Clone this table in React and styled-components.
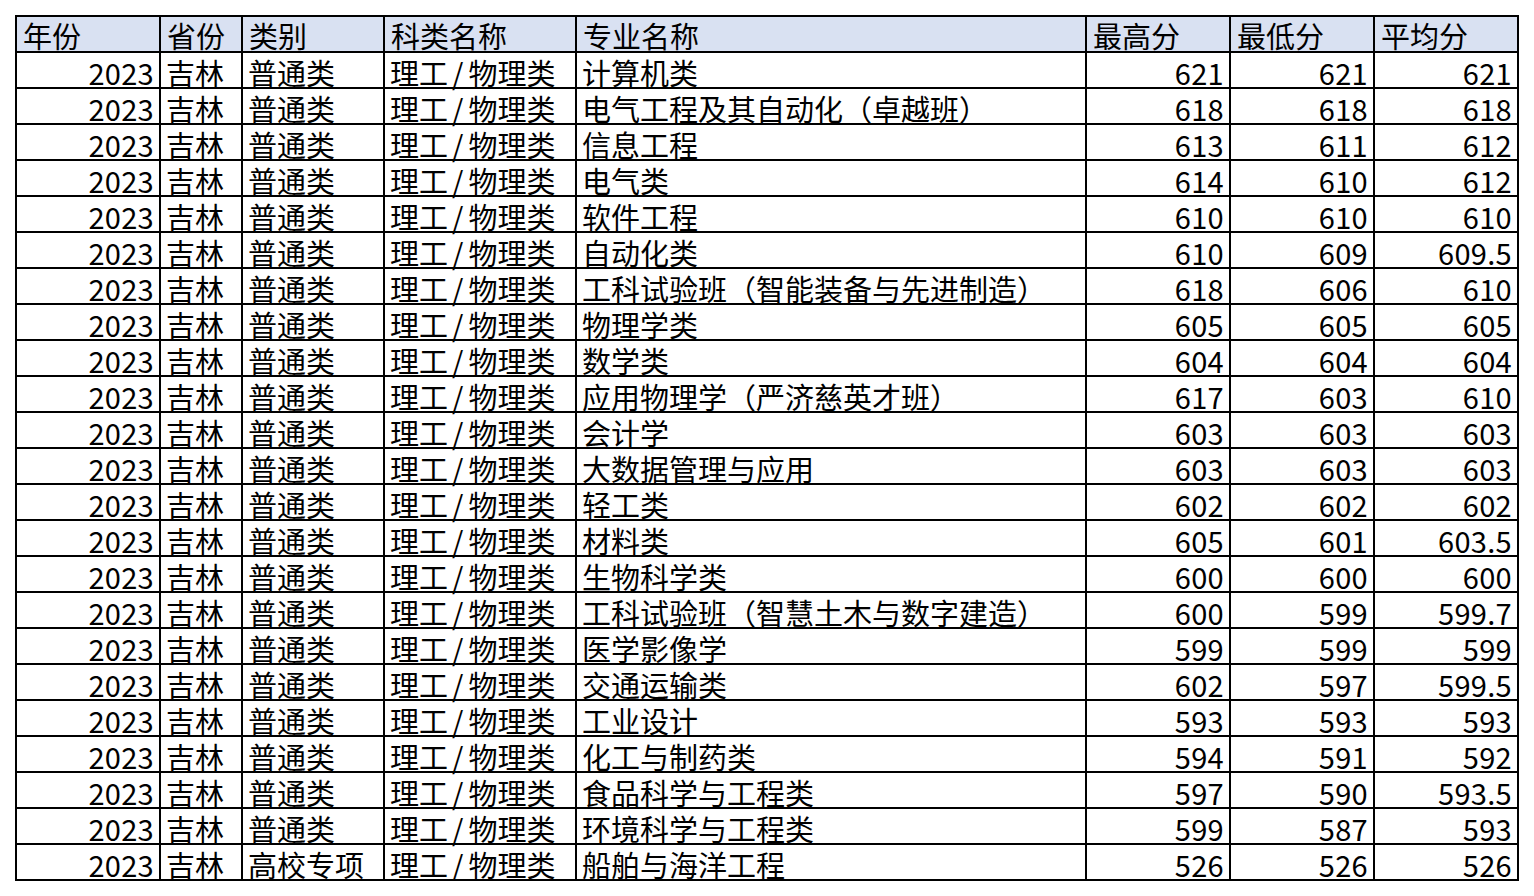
import React from "react";
import styled, { createGlobalStyle } from "styled-components";

const GlobalStyle = createGlobalStyle`
  body {
    margin: 0;
    background: #ffffff;
  }
`;

const columns = [
  { key: "year", title: "年份", width: 144, align: "right" },
  { key: "province", title: "省份", width: 82, align: "left" },
  { key: "type", title: "类别", width: 142, align: "left" },
  { key: "subject", title: "科类名称", width: 192, align: "left" },
  { key: "major", title: "专业名称", width: 510, align: "left" },
  { key: "max", title: "最高分", width: 144, align: "right" },
  { key: "min", title: "最低分", width: 144, align: "right" },
  { key: "avg", title: "平均分", width: 144, align: "right" },
];

const majors = [
  ["计算机类", 621, 621, "621"],
  ["电气工程及其自动化（卓越班）", 618, 618, "618"],
  ["信息工程", 613, 611, "612"],
  ["电气类", 614, 610, "612"],
  ["软件工程", 610, 610, "610"],
  ["自动化类", 610, 609, "609.5"],
  ["工科试验班（智能装备与先进制造）", 618, 606, "610"],
  ["物理学类", 605, 605, "605"],
  ["数学类", 604, 604, "604"],
  ["应用物理学（严济慈英才班）", 617, 603, "610"],
  ["会计学", 603, 603, "603"],
  ["大数据管理与应用", 603, 603, "603"],
  ["轻工类", 602, 602, "602"],
  ["材料类", 605, 601, "603.5"],
  ["生物科学类", 600, 600, "600"],
  ["工科试验班（智慧土木与数字建造）", 600, 599, "599.7"],
  ["医学影像学", 599, 599, "599"],
  ["交通运输类", 602, 597, "599.5"],
  ["工业设计", 593, 593, "593"],
  ["化工与制药类", 594, 591, "592"],
  ["食品科学与工程类", 597, 590, "593.5"],
  ["环境科学与工程类", 599, 587, "593"],
  ["船舶与海洋工程", 526, 526, "526"],
];

const Slash = styled.span`
  padding: 0 5px 0 4px;
`;

const rows = majors.map(([major, max, min, avg], i) => ({
  year: "2023",
  province: "吉林",
  type: i === majors.length - 1 ? "高校专项" : "普通类",
  subject: (
    <>
      理工<Slash>/</Slash>物理类
    </>
  ),
  major,
  max,
  min,
  avg,
}));

const Sheet = styled.div`
  padding: 15px 0 0 15px;
`;

const Table = styled.table`
  border-collapse: collapse;
  table-layout: fixed;
  width: 1504px;
  color: #000;
  font-size: 29px;
`;

const HeadCell = styled.th`
  background: #d9e1f2;
  border: 2px solid #000;
  height: 36px;
  padding: 3px 4px 0 6px;
  line-height: 31px;
  font-family: "Noto Sans CJK SC", sans-serif;
  font-size: 29px;
  font-weight: normal;
  text-align: left;
  white-space: nowrap;
  box-sizing: border-box;
`;

const Cell = styled.td`
  border: 2px solid #000;
  height: 36px;
  padding: 4px 5px 0 ${(p) => (p.$numeric ? "4px" : "5px")};
  line-height: 30px;
  font-family: "Noto Sans CJK SC", sans-serif;
  font-size: 29px;
  letter-spacing: ${(p) => (p.$numeric ? "0.3px" : "0")};
  text-align: ${(p) => (p.$numeric ? "right" : "left")};
  white-space: nowrap;
  box-sizing: border-box;
`;

export default function App() {
  return (
    <>
      <GlobalStyle />
      <Sheet>
        <Table>
          <colgroup>
            {columns.map((c) => (
              <col key={c.key} style={{ width: c.width }} />
            ))}
          </colgroup>
          <thead>
            <tr>
              {columns.map((c) => (
                <HeadCell key={c.key}>{c.title}</HeadCell>
              ))}
            </tr>
          </thead>
          <tbody>
            {rows.map((r, i) => (
              <tr key={i}>
                {columns.map((c) => (
                  <Cell key={c.key} $numeric={c.align === "right"}>
                    {r[c.key]}
                  </Cell>
                ))}
              </tr>
            ))}
          </tbody>
        </Table>
      </Sheet>
    </>
  );
}
